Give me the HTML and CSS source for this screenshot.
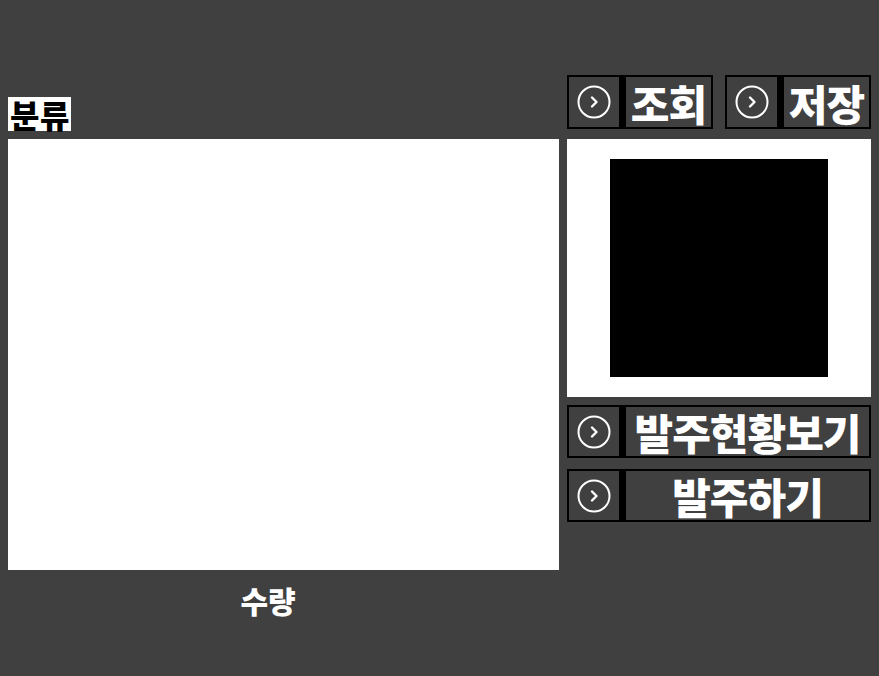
FILE: index.html
```html
<!DOCTYPE html>
<html lang="ko">
<head>
<meta charset="utf-8">
<link rel="stylesheet" href="styles.css">
</head>
<body>
<div class="page">
  <div class="left">
    <div class="label">분류</div>
    <div class="list"></div>
    <div class="qty">수량</div>
  </div>
  <div class="right">
    <div class="toprow">
      <div class="btn small">
        <div class="ico"><svg width="34" height="34" viewBox="0 0 34 34"><circle cx="17" cy="17" r="15.5" fill="none" stroke="#fff" stroke-width="2"/><path d="M15 12.5 L19.5 17 L15 21.5" fill="none" stroke="#fff" stroke-width="2.4" stroke-linecap="round" stroke-linejoin="round"/></svg></div>
        <div class="bar"></div>
        <div class="txt">조회</div>
      </div>
      <div class="btn small">
        <div class="ico"><svg width="34" height="34" viewBox="0 0 34 34"><circle cx="17" cy="17" r="15.5" fill="none" stroke="#fff" stroke-width="2"/><path d="M15 12.5 L19.5 17 L15 21.5" fill="none" stroke="#fff" stroke-width="2.4" stroke-linecap="round" stroke-linejoin="round"/></svg></div>
        <div class="bar"></div>
        <div class="txt">저장</div>
      </div>
    </div>
    <div class="panel"><div class="img"></div></div>
    <div class="btn wide">
      <div class="ico"><svg width="34" height="34" viewBox="0 0 34 34"><circle cx="17" cy="17" r="15.5" fill="none" stroke="#fff" stroke-width="2"/><path d="M15 12.5 L19.5 17 L15 21.5" fill="none" stroke="#fff" stroke-width="2.4" stroke-linecap="round" stroke-linejoin="round"/></svg></div>
      <div class="bar"></div>
      <div class="txt">발주현황보기</div>
    </div>
    <div class="btn wide second">
      <div class="ico"><svg width="34" height="34" viewBox="0 0 34 34"><circle cx="17" cy="17" r="15.5" fill="none" stroke="#fff" stroke-width="2"/><path d="M15 12.5 L19.5 17 L15 21.5" fill="none" stroke="#fff" stroke-width="2.4" stroke-linecap="round" stroke-linejoin="round"/></svg></div>
      <div class="bar"></div>
      <div class="txt">발주하기</div>
    </div>
  </div>
</div>
</body>
</html>
```

FILE: styles.css
```css
html, body {
  margin: 0;
  padding: 0;
  background: #404040;
  width: 879px;
  height: 676px;
  overflow: hidden;
  font-family: "Noto Sans CJK KR", "Noto Sans", sans-serif;
}
.page {
  display: flex;
  align-items: flex-start;
  padding-left: 8px;
  gap: 8px;
}
.left {
  width: 551px;
  margin-top: 97px;
  display: flex;
  flex-direction: column;
  align-items: flex-start;
}
.label {
  background: #fff;
  color: #000;
  font-weight: 900;
  font-size: 32px;
  line-height: 34px;
  height: 34px;
  padding: 0 1px 0 2px;
  letter-spacing: 0.5px;
}
.list {
  margin-top: 8px;
  width: 551px;
  height: 431px;
  background: #fff;
}
.qty {
  width: 520px;
  text-align: center;
  color: #fff;
  font-weight: 900;
  font-size: 30px;
  line-height: 40px;
  margin-top: 10px;
}
.right {
  width: 304px;
  margin-top: 75px;
  display: flex;
  flex-direction: column;
}
.toprow {
  display: flex;
  justify-content: space-between;
}
.btn {
  box-sizing: border-box;
  border: 2px solid #000;
  display: flex;
  align-items: stretch;
  background: #404040;
}
.btn.small {
  width: 146px;
  height: 54px;
}
.btn.wide {
  width: 304px;
  height: 53px;
  margin-top: 8px;
}
.btn.wide.second {
  margin-top: 11px;
}
.ico {
  width: 50px;
  display: flex;
  align-items: center;
  justify-content: center;
}
.ico svg { display: block; }
.bar {
  width: 7px;
  background: #000;
}
.txt {
  flex: 1;
  display: flex;
  align-items: center;
  justify-content: center;
  color: #fff;
  font-weight: 900;
  font-size: 42px;
  line-height: 49px;
  letter-spacing: -1px;
  white-space: nowrap;
}
.panel {
  margin-top: 10px;
  height: 258px;
  background: #fff;
  display: flex;
  justify-content: center;
  align-items: center;
}
.img {
  width: 218px;
  height: 218px;
  background: #000;
}
```
